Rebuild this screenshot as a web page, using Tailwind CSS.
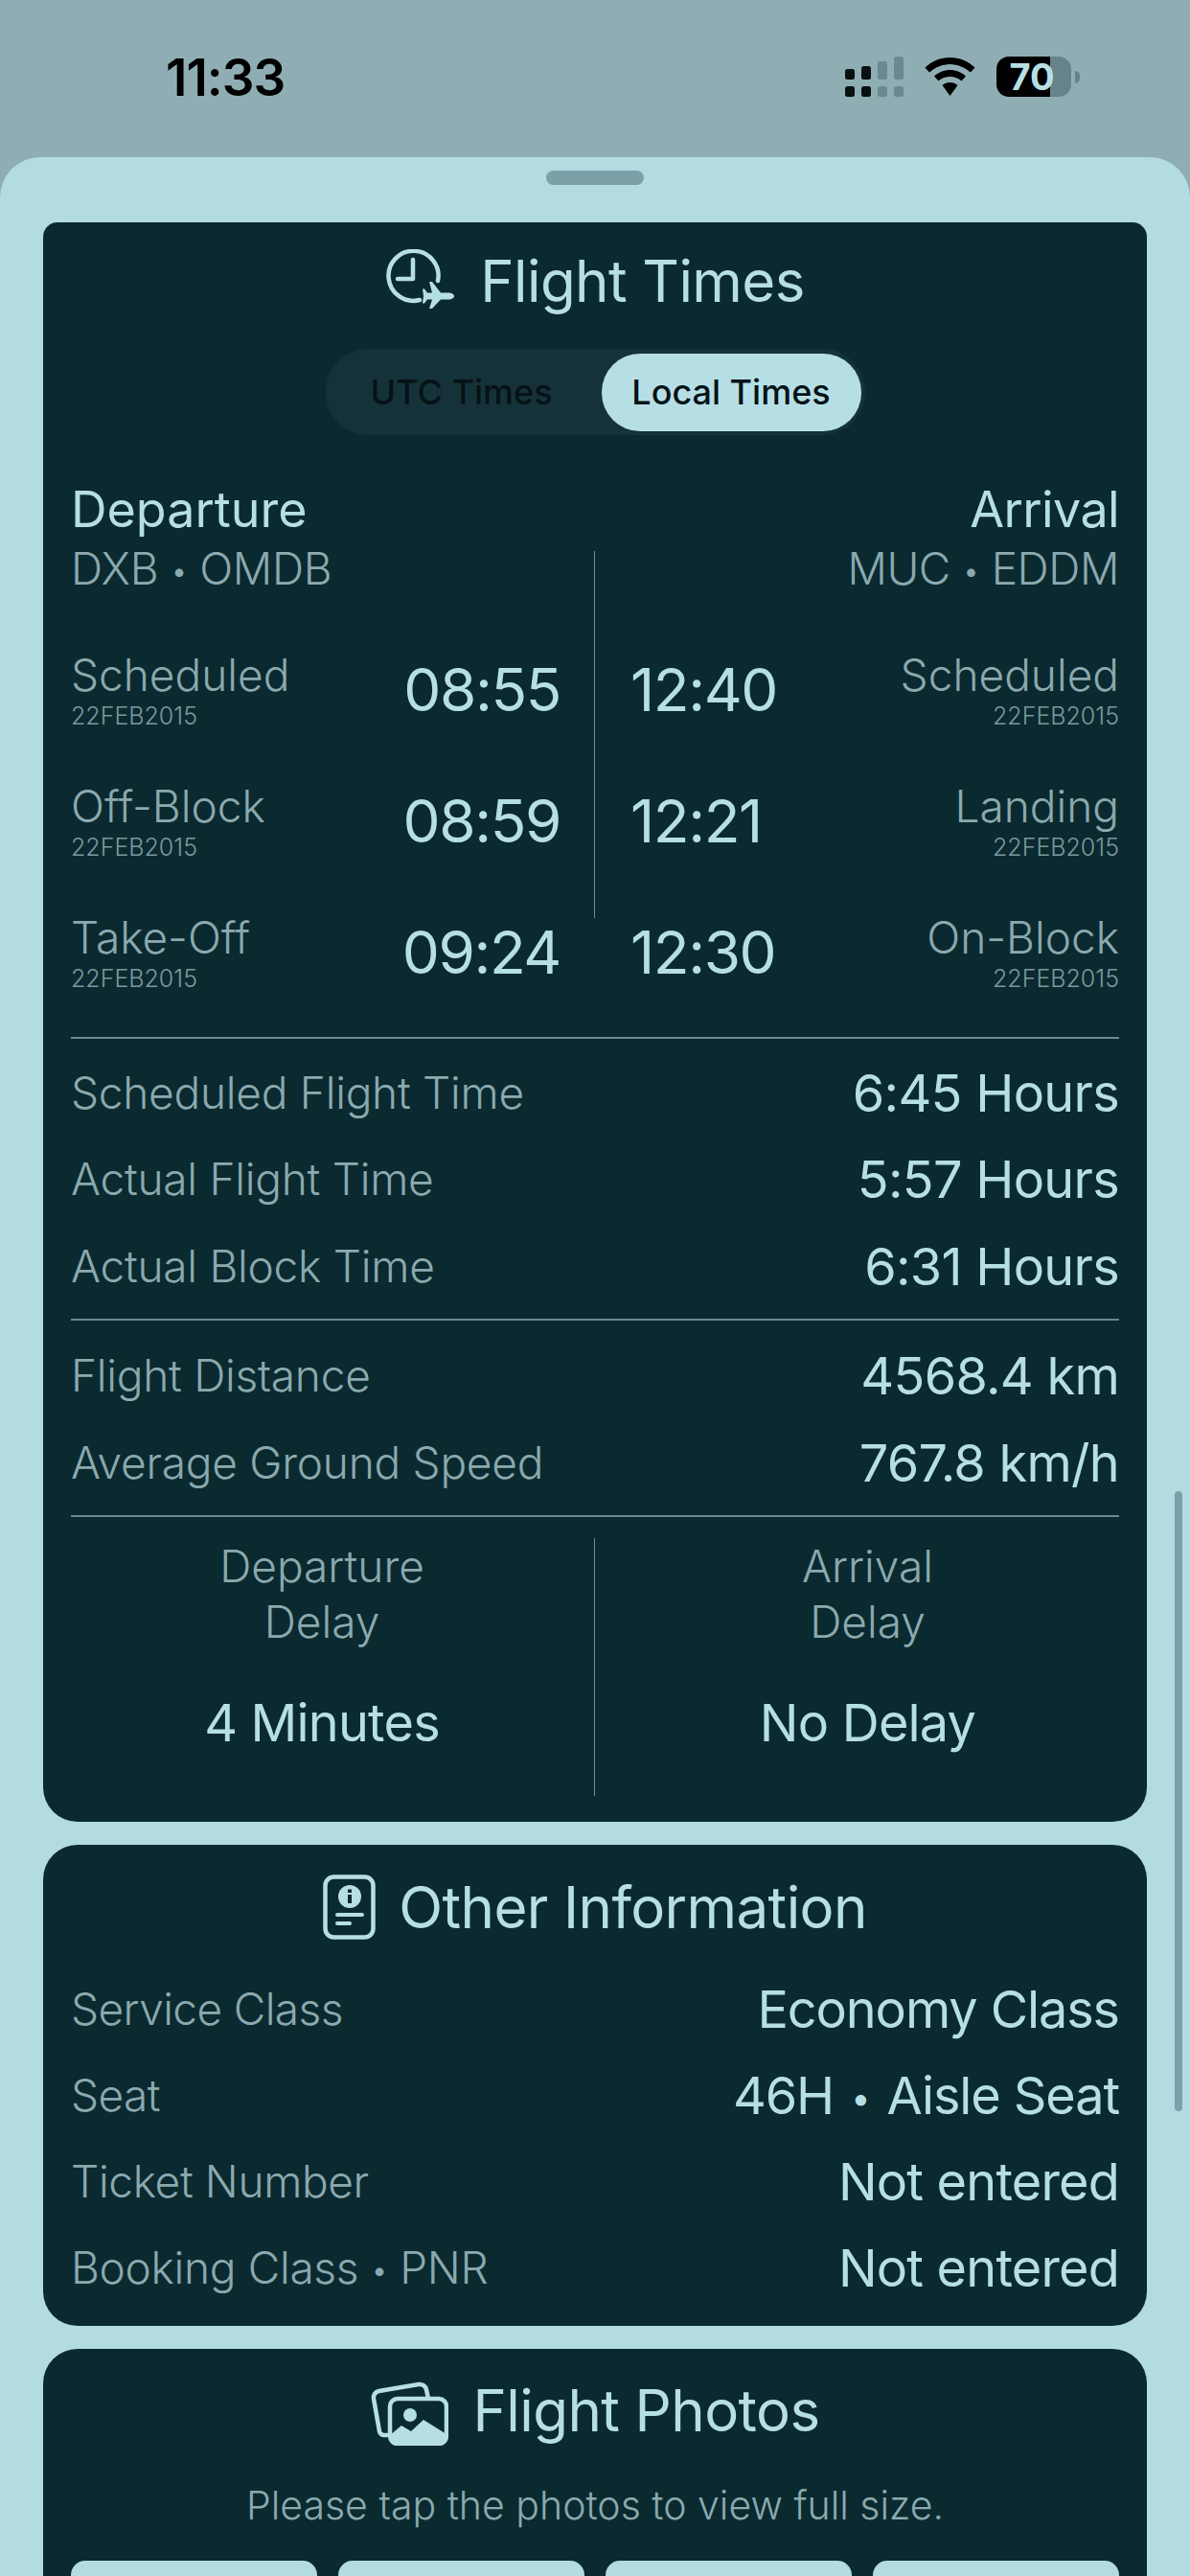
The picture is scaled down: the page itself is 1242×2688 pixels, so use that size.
<!DOCTYPE html>
<html lang="en">
<head>
    <meta charset="UTF-8">
    <meta name="viewport" content="width=device-width, initial-scale=1.0">
    <title>Flight Details</title>
    <script src="https://cdn.jsdelivr.net/npm/@tailwindcss/browser@4"></script>
</head>
<body class="w-[1242px] h-[2688px] overflow-hidden bg-[#8faeb4] font-['Inter',sans-serif] text-[#b6dfe5]">

    <!-- Status bar -->
    <header class="h-[164px] flex justify-between pl-[173px] pr-[115px] pt-[48px] text-black">
        <div class="text-[53px] leading-[66px] font-semibold tracking-[-1px]">11:33</div>
        <div class="flex items-start gap-[22px] pt-[11px]">
            <svg width="61" height="43" viewBox="0 0 61 43">
                <g fill="#0a0f11">
                    <rect x="0" y="13" width="10" height="11" rx="2.5"/><rect x="0" y="31" width="10" height="11" rx="2.5"/>
                    <rect x="17" y="10" width="10" height="14" rx="2.5"/><rect x="17" y="31" width="10" height="11" rx="2.5"/>
                </g>
                <g fill="#6b8a90">
                    <rect x="34" y="5" width="10" height="19" rx="2.5"/><rect x="34" y="31" width="10" height="11" rx="2.5"/>
                    <rect x="51" y="0" width="10" height="24" rx="2.5"/><rect x="51" y="31" width="10" height="11" rx="2.5"/>
                </g>
            </svg>
            <svg width="53" height="41" viewBox="0 0 53 41" class="mt-[1px]">
                <path d="M26.5 0C16.500 0 7.500 4 0.500 10.500L5 15.500C11 10.500 18.500 7 26.500 7S42 10.500 48 15.500L52.500 10.500C45.500 4 36.500 0 26.500 0Z" fill="#000"/>
                <path d="M26.500 13C20 13 14.500 15.500 10 19.500L14.500 24.500C17.500 21.500 21.800 20 26.500 20S35.500 21.500 38.500 24.500L43 19.500C38.500 15.500 33 13 26.500 13Z" fill="#000"/>
                <path d="M26.500 26C23.500 26 20.500 27 18.500 29L26.500 40L34.500 29C32.500 27 29.500 26 26.500 26Z" fill="#000"/>
            </svg>
            <div class="flex items-center gap-[4px]">
                <div class="w-[78px] h-[42px] rounded-[13px] bg-[linear-gradient(90deg,#000_72%,#66838a_72%)] flex items-center justify-center text-[#b6dfe5] text-[38px] font-bold leading-none pr-[4px]">70</div>
                <div class="w-[5px] h-[13px] rounded-r-full bg-[#66838a]"></div>
            </div>
        </div>
    </header>

    <!-- Sheet -->
    <main class="relative h-[2524px] overflow-hidden bg-[#b2dbe2] rounded-t-[42px]">
        <div class="h-[68px] flex justify-center pt-[14px]">
            <div class="w-[102px] h-[15px] rounded-full bg-[#7ba0a8]"></div>
        </div>

        <!-- Scroll indicator -->
        <div class="absolute left-[1226px] top-[1392px] w-[8px] h-[647px] rounded-full bg-[#7ba0a8]"></div>

        <div class="px-[45px] flex flex-col gap-[24px]">

            <!-- Flight Times card -->
            <section class="h-[1669px] bg-[#0a2a30] rounded-t-[15px] rounded-b-[36px] px-[29px] pt-[25px]">
                <div class="h-[72px] flex items-center justify-center gap-[27px]">
                    <svg width="72" height="66" viewBox="0 0 72 66" fill="none" class="mt-[-1px]">
                        <path d="M55 33A26 26 0 1 0 36 53" stroke="#b6dfe5" stroke-width="4.500" stroke-linecap="round"/>
                        <path d="M29 11V31H13" stroke="#b6dfe5" stroke-width="4.500" stroke-linejoin="round" stroke-linecap="round"/>
                        <path d="M72 49c0-2-3-3.500-6-3.500h-8L49 34h-3l3 11.500h-5l-3-4h-2l1 7.500-1 7.500h2l3-4h5l-3 9.500h3l9-9.500h8c3 0 6-1.500 6-3.500z" fill="#b6dfe5"/>
                    </svg>
                    <h2 class="text-[60px] leading-[72px] font-normal tracking-[-0.6px]">Flight Times</h2>
                </div>

                <div class="mt-[35px] flex justify-center">
                    <div class="w-[563px] h-[90px] rounded-full bg-[#15323a] flex items-center justify-between pl-[4px] pr-[4px]">
                        <span class="w-[276px] text-center text-[36px] text-[#051216] font-medium">UTC Times</span>
                        <span class="w-[271px] h-[81px] rounded-[40px] bg-[#b6dfe5] flex items-center justify-center text-[36px] text-[#051216] font-medium">Local Times</span>
                    </div>
                </div>

                <div class="relative">
                    <div class="absolute left-[546px] top-[121px] w-[1px] h-[383px] bg-[#6c8a90]"></div>

                    <div class="flex justify-between h-[197px] pt-[47px]">
                        <div>
                            <div class="text-[52px] leading-[62px]">Departure</div>
                            <div class="text-[46px] leading-[60px] font-light text-[#8ba9ae] tracking-[-0.3px]">DXB <span class="text-[32px] align-[3px]">•</span> OMDB</div>
                        </div>
                        <div class="text-right">
                            <div class="text-[52px] leading-[62px] tracking-[-0.6px]">Arrival</div>
                            <div class="text-[46px] leading-[60px] font-light text-[#8ba9ae] tracking-[-0.4px]">MUC <span class="text-[32px] align-[3px]">•</span> EDDM</div>
                        </div>
                    </div>

                    <div class="h-[137px] flex justify-between items-center">
                        <div class="w-[511px] flex justify-between items-center">
                            <div class="mt-[-2px]">
                                <div class="text-[46px] leading-[56px] font-light text-[#8ba9ae]">Scheduled</div>
                                <div class="text-[25px] leading-[30px] font-light text-[#7b999e]">22FEB2015</div>
                            </div>
                            <div class="text-[62px] font-normal tracking-[-1.4px]">08:55</div>
                        </div>
                        <div class="w-[510px] flex justify-between items-center">
                            <div class="text-[62px] font-normal tracking-[-1.4px]">12:40</div>
                            <div class="text-right mt-[-2px]">
                                <div class="text-[46px] leading-[56px] font-light text-[#8ba9ae]">Scheduled</div>
                                <div class="text-[25px] leading-[30px] font-light text-[#7b999e]">22FEB2015</div>
                            </div>
                        </div>
                    </div>
                    <div class="h-[137px] flex justify-between items-center">
                        <div class="w-[511px] flex justify-between items-center">
                            <div class="mt-[-2px]">
                                <div class="text-[46px] leading-[56px] font-light text-[#8ba9ae]">Off-Block</div>
                                <div class="text-[25px] leading-[30px] font-light text-[#7b999e]">22FEB2015</div>
                            </div>
                            <div class="text-[62px] font-normal tracking-[-1.4px]">08:59</div>
                        </div>
                        <div class="w-[510px] flex justify-between items-center">
                            <div class="text-[62px] font-normal tracking-[-1.4px]">12:21</div>
                            <div class="text-right mt-[-2px]">
                                <div class="text-[46px] leading-[56px] font-light text-[#8ba9ae]">Landing</div>
                                <div class="text-[25px] leading-[30px] font-light text-[#7b999e]">22FEB2015</div>
                            </div>
                        </div>
                    </div>
                    <div class="h-[137px] flex justify-between items-center">
                        <div class="w-[511px] flex justify-between items-center">
                            <div class="mt-[-2px]">
                                <div class="text-[46px] leading-[56px] font-light text-[#8ba9ae]">Take-Off</div>
                                <div class="text-[25px] leading-[30px] font-light text-[#7b999e]">22FEB2015</div>
                            </div>
                            <div class="text-[62px] font-normal tracking-[-1.4px]">09:24</div>
                        </div>
                        <div class="w-[510px] flex justify-between items-center">
                            <div class="text-[62px] font-normal tracking-[-1.4px]">12:30</div>
                            <div class="text-right mt-[-2px]">
                                <div class="text-[46px] leading-[56px] font-light text-[#8ba9ae]">On-Block</div>
                                <div class="text-[25px] leading-[30px] font-light text-[#7b999e]">22FEB2015</div>
                            </div>
                        </div>
                    </div>
                </div>

                <div class="mt-[20px] h-[2px] bg-[#6c8a90]"></div>

                <div class="pt-[11px] pb-[9px]">
                    <div class="h-[90.500px] flex justify-between items-center">
                        <span class="text-[46px] font-light text-[#8ba9ae] tracking-[-0.25px]">Scheduled Flight Time</span>
                        <span class="text-[54px] tracking-[-0.7px]">6:45 Hours</span>
                    </div>
                    <div class="h-[90.500px] flex justify-between items-center">
                        <span class="text-[46px] font-light text-[#8ba9ae] tracking-[-0.25px]">Actual Flight Time</span>
                        <span class="text-[54px] tracking-[-0.7px]">5:57 Hours</span>
                    </div>
                    <div class="h-[90.500px] flex justify-between items-center">
                        <span class="text-[46px] font-light text-[#8ba9ae] tracking-[-0.25px]">Actual Block Time</span>
                        <span class="text-[54px] tracking-[-0.7px]">6:31 Hours</span>
                    </div>
                </div>

                <div class="h-[2px] bg-[#6c8a90]"></div>

                <div class="pt-[13px] pb-[9px]">
                    <div class="h-[90.500px] flex justify-between items-center">
                        <span class="text-[46px] font-light text-[#8ba9ae] tracking-[-0.25px]">Flight Distance</span>
                        <span class="text-[54px] tracking-[-0.7px]">4568.4 km</span>
                    </div>
                    <div class="h-[90.500px] flex justify-between items-center">
                        <span class="text-[46px] font-light text-[#8ba9ae] tracking-[-0.25px]">Average Ground Speed</span>
                        <span class="text-[54px] tracking-[-0.7px]">767.8 km/h</span>
                    </div>
                </div>

                <div class="h-[2px] bg-[#6c8a90]"></div>

                <div class="mt-[22px] mx-[-22px] h-[269px] grid grid-cols-2">
                    <div class="border-r border-[#6c8a90] text-center">
                        <div class="text-[46px] leading-[58px] font-light text-[#8ba9ae]">Departure<br>Delay</div>
                        <div class="mt-[45px] text-[54px] leading-[64px] tracking-[-0.8px]">4 Minutes</div>
                    </div>
                    <div class="text-center">
                        <div class="text-[46px] leading-[58px] font-light text-[#8ba9ae]">Arrival<br>Delay</div>
                        <div class="mt-[45px] text-[54px] leading-[64px] tracking-[-0.8px]">No Delay</div>
                    </div>
                </div>
            </section>

            <!-- Other Information card -->
            <section class="h-[502px] bg-[#0a2a30] rounded-[36px] px-[29px] pt-[29px]">
                <div class="h-[72px] flex items-center justify-center gap-[24px]">
                    <svg width="55" height="68" viewBox="0 0 55 68" fill="none">
                        <rect x="2.500" y="2.500" width="50" height="63" rx="9" stroke="#b6dfe5" stroke-width="4.500"/>
                        <circle cx="28" cy="23" r="12" fill="#b6dfe5"/>
                        <rect x="26" y="21" width="4" height="9" fill="#0a2a30"/>
                        <rect x="26" y="15.500" width="4" height="3.500" fill="#0a2a30"/>
                        <path d="M15 42H41M15 51H28" stroke="#b6dfe5" stroke-width="4" stroke-linecap="round"/>
                    </svg>
                    <h2 class="text-[60px] leading-[72px] tracking-[-0.6px]">Other Information</h2>
                </div>
                <div class="mt-[25px]">
                    <div class="h-[90px] flex justify-between items-center">
                        <span class="text-[46px] font-light text-[#8ba9ae] tracking-[-0.6px]">Service Class</span>
                        <span class="text-[54px] tracking-[-1.1px]">Economy Class</span>
                    </div>
                    <div class="h-[90px] flex justify-between items-center">
                        <span class="text-[46px] font-light text-[#8ba9ae] tracking-[-0.6px]">Seat</span>
                        <span class="text-[54px] tracking-[-1.1px]">46H <span class="text-[36px] align-[4px] mx-[4px]">•</span> Aisle Seat</span>
                    </div>
                    <div class="h-[90px] flex justify-between items-center">
                        <span class="text-[46px] font-light text-[#8ba9ae] tracking-[-0.35px]">Ticket Number</span>
                        <span class="text-[54px] tracking-[-0.8px]">Not entered</span>
                    </div>
                    <div class="h-[90px] flex justify-between items-center">
                        <span class="text-[46px] font-light text-[#8ba9ae] tracking-[-0.3px]">Booking Class <span class="text-[32px] align-[3px]">•</span> PNR</span>
                        <span class="text-[54px] tracking-[-0.8px]">Not entered</span>
                    </div>
                </div>
            </section>

            <!-- Flight Photos card -->
            <section class="h-[400px] bg-[#0a2a30] rounded-[36px] px-[29px] pt-[28px]">
                <div class="h-[72px] flex items-center justify-center gap-[26px]">
                    <svg width="81" height="67" viewBox="0 0 81 67" fill="none" class="mt-[6px]">
                        <path d="M17 56h-3a5 5 0 0 1-5-4L3 18a7 7 0 0 1 5.500-8L50 3a7 7 0 0 1 8 5.500l1.500 7" stroke="#b6dfe5" stroke-width="4.500" stroke-linecap="round"/>
                        <rect x="20" y="18" width="59" height="47" rx="8" stroke="#b6dfe5" stroke-width="4.500"/>
                        <circle cx="41" cy="35" r="7" fill="#b6dfe5"/>
                        <path d="M20 56L32 46L42 52L55 40L79 55V60a7 7 0 0 1-7 7H27a7 7 0 0 1-7-7z" fill="#b6dfe5"/>
                    </svg>
                    <h2 class="text-[60px] leading-[72px] tracking-[-0.6px]">Flight Photos</h2>
                </div>
                <p class="mt-[38px] text-center text-[41px] leading-[50px] font-light text-[#8ba9ae]">Please tap the photos to view full size.</p>
                <div class="mt-[33px] grid grid-cols-4 gap-[22px]">
                    <div class="h-[260px] rounded-[15px] bg-[#b2dbe2]"></div>
                    <div class="h-[260px] rounded-[15px] bg-[#b2dbe2]"></div>
                    <div class="h-[260px] rounded-[15px] bg-[#b2dbe2]"></div>
                    <div class="h-[260px] rounded-[15px] bg-[#b2dbe2]"></div>
                </div>
            </section>
        </div>
    </main>

</body>
</html>
